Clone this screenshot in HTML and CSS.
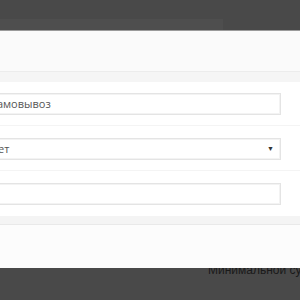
FILE: index.html
```html
<!DOCTYPE html>
<html lang="ru">
<head>
    <meta charset="UTF-8">
    <title>Доставка</title>
    <link rel="stylesheet" href="styles.css">
</head>
<body>
    <div class="topbar"></div>
    <div class="modal">
        <div class="modal-header"></div>
        <div class="modal-strip"></div>
        <div class="modal-body">
            <div class="row">
                <div class="field">Самовывоз</div>
            </div>
            <div class="row">
                <div class="field select">Нет<span class="arrow">▼</span></div>
            </div>
            <div class="row last">
                <div class="field"></div>
            </div>
        </div>
        <div class="modal-footer"></div>
    </div>
    <div class="page-text">Минимальной суммы заказа</div>
</body>
</html>
```

FILE: styles.css
```css
* {
    margin: 0;
    padding: 0;
    box-sizing: border-box;
}
body {
    font-family: 'Open Sans', sans-serif;
    background-color: #494949;
    width: 300px;
    height: 300px;
    overflow: hidden;
    padding-top: 19px;
}
.topbar {
    width: 223px;
    height: 11px;
    background-color: #4e4e4e;
}
.modal {
    position: relative;
    z-index: 1;
    width: 300px;
    background-color: #fff;
    border-top: 1px solid #9a9a9a;
}
.modal-header {
    height: 41px;
    background-color: #fafafa;
    border-bottom: 1px solid #ececec;
}
.modal-strip {
    height: 10px;
    background-color: #f5f5f5;
}
.modal-body {
    padding: 11px 19px 0 0;
}
.row {
    padding-bottom: 10px;
    margin-bottom: 12px;
    border-bottom: 1px solid #f4f4f4;
    margin-right: -19px;
    padding-right: 19px;
}
.row.last {
    border-bottom: none;
    margin-bottom: 0;
    padding-bottom: 11px;
}
.field {
    height: 22px;
    margin-left: -16px;
    padding-left: 5px;
    border: 1px solid #e4e4e4;
    box-shadow: inset 0 0 0 1px #f3f3f3;
    font-size: 11px;
    line-height: 20px;
    color: #555;
    white-space: nowrap;
    display: flex;
    align-items: center;
}
.select {
    justify-content: space-between;
    padding-right: 6px;
}
.arrow {
    font-size: 7px;
    color: #333;
}
.modal-footer {
    height: 52px;
    background-color: #fcfcfc;
    border-top: 8px solid #f4f4f4;
    box-shadow: inset 0 1px 0 #e9e9e9;
}
.page-text {
    margin-top: -5px;
    padding-left: 208px;
    font-family: 'Liberation Sans', Arial, sans-serif;
    font-size: 12px;
    line-height: 14px;
    color: #1a1a1a;
    white-space: nowrap;
}
```
